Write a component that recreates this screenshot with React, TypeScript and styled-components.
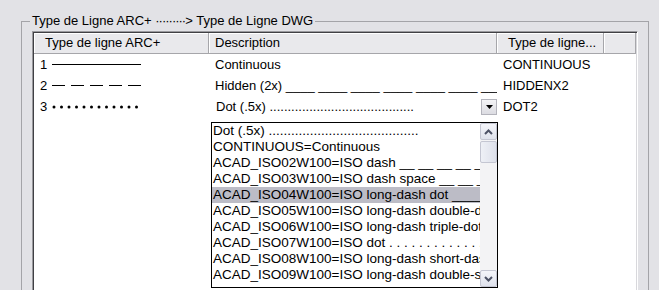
import React from "react";
import styled, { createGlobalStyle } from "styled-components";

const GlobalStyle = createGlobalStyle`
	html, body {
		margin: 0;
		padding: 0;
	}
	body {
		background: #e2e2e6;
		font-family: "Liberation Sans", Arial, sans-serif;
		font-size: 13px;
		color: #000;
	}
`;

const Page = styled.div`
	width: 659px;
	height: 290px;
	overflow: hidden;
	box-sizing: border-box;
	padding: 14px 0 0 21px;
`;

const GroupBox = styled.fieldset`
	margin: 0;
	width: 628px;
	height: 300px;
	box-sizing: border-box;
	border: 1px solid #a4a4a8;
	padding: 3px 10px 0 10px;
`;

const Legend = styled.legend`
	margin-left: -2px;
	padding: 0 2px;
	font-family: "Liberation Sans", Arial, sans-serif;
	font-size: 13px;
	line-height: 14px;
`;

const Arrow = styled.span`
	letter-spacing: -1px;
	margin-right: 1px;
`;

const ListView = styled.div`
	width: 606px;
	height: 280px;
	box-sizing: border-box;
	background: #fff;
	border: 1px solid;
	border-color: #9a9a9e #ffffff #ffffff #9a9a9e;
	box-shadow: inset 1px 1px 0 #404044, inset -1px -1px 0 #d8d8dc;
	padding: 1px;
`;

const HeaderRow = styled.div`
	display: flex;
	height: 20px;
	background: #e9e9ec;
	border-bottom: 1px solid #a6a6aa;
`;

const HeaderCell = styled.div<{ $w?: number; $pad: number }>`
	${(p) => (p.$w ? `width: ${p.$w}px;` : "flex: 1;")}
	box-sizing: border-box;
	padding-left: ${(p) => p.$pad}px;
	line-height: 20px;
	border-right: 1px solid #a6a6aa;
	box-shadow: inset 1px 1px 0 #ffffff;
	white-space: nowrap;
	overflow: hidden;
`;

const Row = styled.div`
	display: flex;
	height: 21px;
	align-items: center;
`;

const Cell = styled.div<{ $w: number; $pad: number }>`
	width: ${(p) => p.$w}px;
	box-sizing: border-box;
	padding-left: ${(p) => p.$pad}px;
	display: flex;
	align-items: center;
	white-space: nowrap;
	overflow: hidden;
	height: 100%;
`;

const Sample = styled.svg`
	margin-left: 5px;
	flex: none;
`;

const ComboCell = styled.div`
	width: 288px;
	height: 100%;
	position: relative;
	box-sizing: border-box;
	padding-left: 1px;
`;

const Combo = styled.div`
	display: flex;
	align-items: center;
	height: 100%;
`;

const ComboText = styled.div`
	flex: 1;
	padding-left: 6px;
	white-space: nowrap;
	overflow: hidden;
`;

const DropButton = styled.div`
	width: 16px;
	height: 16px;
	box-sizing: border-box;
	background: linear-gradient(#f4f4f6, #dcdce2);
	border: 1px solid #b4b4bc;
	display: flex;
	align-items: center;
	justify-content: center;
`;

const DropList = styled.div`
	position: absolute;
	left: 2px;
	top: 26px;
	width: 287px;
	height: 166px;
	box-sizing: border-box;
	border: 1px solid #000;
	background: #fff;
	display: flex;
	z-index: 2;
`;

const Items = styled.div`
	flex: 1;
	overflow: hidden;
`;

const Item = styled.div<{ $selected?: boolean }>`
	height: 16px;
	line-height: 16px;
	font-size: 13.5px;
	padding-left: 1px;
	white-space: nowrap;
	overflow: hidden;
	background: ${(p) => (p.$selected ? "#bcbcc6" : "transparent")};
`;

const ScrollBar = styled.div`
	width: 17px;
	display: flex;
	flex-direction: column;
	background: #f3f3f5;
`;

const ScrollButton = styled.div`
	height: 17px;
	box-sizing: border-box;
	border: 1px solid #c4c6d2;
	border-radius: 2px;
	background: linear-gradient(#f4f5fa, #dfe2ec);
	display: flex;
	align-items: center;
	justify-content: center;
`;

const Thumb = styled.div`
	height: 22px;
	margin-top: 1px;
	box-sizing: border-box;
	border: 1px solid #c4c6d2;
	border-radius: 2px;
	background: linear-gradient(90deg, #eef0f6, #dde0ea);
`;

const Track = styled.div`
	flex: 1;
`;

const dropItems = [
	"Dot (.5x) ........................................",
	"CONTINUOUS=Continuous",
	"ACAD_ISO02W100=ISO dash __ __ __ __ __ __",
	"ACAD_ISO03W100=ISO dash space __   __   __",
	"ACAD_ISO04W100=ISO long-dash dot _______",
	"ACAD_ISO05W100=ISO long-dash double-dot",
	"ACAD_ISO06W100=ISO long-dash triple-dot",
	"ACAD_ISO07W100=ISO dot . . . . . . . . . . . . . . . . .",
	"ACAD_ISO08W100=ISO long-dash short-dash",
	"ACAD_ISO09W100=ISO long-dash double-short-dash",
];

function Chevron({ up }: { up?: boolean }) {
	return (
		<svg width="9" height="6" viewBox="0 0 9 6">
			<polyline
				points={up ? "1,5 4.5,1.5 8,5" : "1,1 4.5,4.5 8,1"}
				fill="none"
				stroke="#4d5266"
				strokeWidth="2"
			/>
		</svg>
	);
}

export default function App() {
	return (
		<Page>
			<GlobalStyle />
			<GroupBox>
				<Legend>
					Type de Ligne ARC+ <Arrow>·········&gt;</Arrow> Type de Ligne DWG
				</Legend>
				<ListView>
					<HeaderRow>
						<HeaderCell $w={175} $pad={11}>Type de ligne ARC+</HeaderCell>
						<HeaderCell $w={288} $pad={6}>Description</HeaderCell>
						<HeaderCell $w={107} $pad={11}>Type de ligne...</HeaderCell>
						<HeaderCell $pad={0} />
					</HeaderRow>
					<Row>
						<Cell $w={175} $pad={6}>
							1
							<Sample width="92" height="3">
								<line x1="0" y1="1.5" x2="89" y2="1.5" stroke="#000" strokeWidth="1" />
							</Sample>
						</Cell>
						<Cell $w={288} $pad={6}>Continuous</Cell>
						<Cell $w={107} $pad={6}>CONTINUOUS</Cell>
					</Row>
					<Row>
						<Cell $w={175} $pad={6}>
							2
							<Sample width="92" height="3">
								<line x1="0" y1="1.5" x2="89" y2="1.5" stroke="#000" strokeWidth="1" strokeDasharray="13 6" />
							</Sample>
						</Cell>
						<Cell $w={288} $pad={6}>Hidden (2x) ____ ____ ____ ____ ____ ____ ____ ____</Cell>
						<Cell $w={107} $pad={6}>HIDDENX2</Cell>
					</Row>
					<Row>
						<Cell $w={175} $pad={6}>
							3
							<Sample width="92" height="4">
								{Array.from({ length: 12 }).map((_, i) => (
									<circle key={i} cx={2 + i * 7.5} cy="2" r="1.5" fill="#000" />
								))}
							</Sample>
						</Cell>
						<ComboCell>
							<Combo>
								<ComboText>Dot (.5x) ........................................</ComboText>
								<DropButton>
									<svg width="7" height="4" viewBox="0 0 7 4">
										<polygon points="0,0 7,0 3.5,4" fill="#000" />
									</svg>
								</DropButton>
							</Combo>
							<DropList>
								<Items>
									{dropItems.map((t, i) => (
										<Item key={i} $selected={i === 4}>{t}</Item>
									))}
								</Items>
								<ScrollBar>
									<ScrollButton><Chevron up /></ScrollButton>
									<Thumb />
									<Track />
									<ScrollButton><Chevron /></ScrollButton>
								</ScrollBar>
							</DropList>
						</ComboCell>
						<Cell $w={107} $pad={6}>DOT2</Cell>
					</Row>
				</ListView>
			</GroupBox>
		</Page>
	);
}
